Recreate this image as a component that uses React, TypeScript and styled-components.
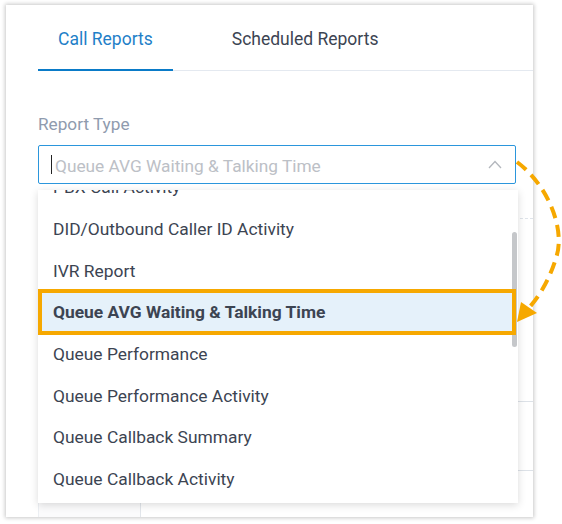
import React from "react";
import styled, { createGlobalStyle } from "styled-components";

const Global = createGlobalStyle`
  html, body { margin: 0; padding: 0; background: #ffffff; }
  body { font-family: Roboto, "Noto Sans", Arial, sans-serif; overflow: hidden; }
  * { box-sizing: border-box; }
`;

const Page = styled.div`
  position: relative;
  width: 562px;
  height: 524px;
  padding: 5px 0 0 6px;
`;

const Card = styled.div`
  width: 527px;
  height: 512px;
  background: #fff;
  box-shadow: 0 0 4px 1px rgba(0, 0, 0, 0.22);
  padding: 0 17px 0 32px;
  overflow: hidden;
  position: relative;
`;

const TabBar = styled.div`
  display: flex;
  gap: 39px;
  height: 66px;
  border-bottom: 1px solid #e4e9f0;
  margin-right: -17px;
`;

const Tab = styled.div<{ $active?: boolean }>`
  position: relative;
  display: flex;
  align-items: center;
  padding: 2px 20px 0 20px;
  font-size: 17.5px;
  color: ${(p) => (p.$active ? "#1f7fc8" : "#3c4452")};
  &::after {
    content: "";
    display: ${(p) => (p.$active ? "block" : "none")};
    position: absolute;
    left: 0;
    right: 0;
    bottom: -1px;
    height: 2px;
    background: #0a7bc8;
  }
`;

const Field = styled.div`
  position: relative;
  margin-top: 43px;
`;

const Label = styled.div`
  font-size: 17.2px;
  color: #8f9bae;
  line-height: 20px;
  margin-bottom: 11px;
`;

const Input = styled.div`
  height: 39px;
  border: 1px solid #2b96dc;
  border-radius: 2px;
  display: flex;
  align-items: center;
  padding: 0 13px 0 12px;
`;

const Caret = styled.span`
  width: 1px;
  height: 19px;
  background: #222;
  margin-right: 3px;
`;

const Placeholder = styled.span`
  flex: 1;
  font-size: 17.3px;
  color: #bcc0c6;
  padding-top: 3px;
`;

const Dropdown = styled.div`
  position: absolute;
  top: 76px;
  left: 0;
  width: 480px;
  height: 313px;
  background: #fff;
  box-shadow: 0 2px 8px rgba(0, 0, 0, 0.15);
  overflow: hidden;
  z-index: 2;
  padding-bottom: 4px;
`;

const List = styled.div`
  margin-top: -23.5px;
  margin-right: 6px;
`;

const Item = styled.div<{ $selected?: boolean }>`
  position: relative;
  height: 41.7px;
  display: flex;
  align-items: center;
  padding-left: 15px;
  font-size: 17.4px;
  color: #3c4452;
  font-weight: ${(p) => (p.$selected ? 700 : 400)};
  background: ${(p) => (p.$selected ? "#e5f1fa" : "transparent")};
  &::after {
    content: "";
    display: ${(p) => (p.$selected ? "block" : "none")};
    position: absolute;
    top: -3px;
    bottom: -2px;
    left: 0;
    right: -4px;
    border: 4.5px solid #f6a800;
    z-index: 2;
  }
`;

const Thumb = styled.div`
  position: absolute;
  right: 1px;
  top: 42px;
  width: 5px;
  height: 115px;
  border-radius: 3px;
  background: #c5c7ca;
  z-index: 1;
`;

const Separator = styled.div`
  margin-top: 34px;
  margin-right: -17px;
  border-top: 1px dashed #dfe4ea;
  height: 183px;
`;

const Table = styled.div`
  margin-right: -17px;
  border-left: 1px solid #eceff3;
`;

const Row = styled.div<{ $h: number; $split?: boolean }>`
  height: ${(p) => p.$h}px;
  border-top: 1px solid #dde2e8;
  display: ${(p) => (p.$split ? "grid" : "block")};
  grid-template-columns: 102px 1fr;
`;

const Cell = styled.div`
  border-right: 1px solid #e2e6eb;
  background: #fbfbfc;
`;

const Overlay = styled.svg`
  position: absolute;
  left: 0;
  top: 0;
  pointer-events: none;
  z-index: 5;
`;

const items = [
  "PBX Call Activity",
  "DID/Outbound Caller ID Activity",
  "IVR Report",
  "Queue AVG Waiting & Talking Time",
  "Queue Performance",
  "Queue Performance Activity",
  "Queue Callback Summary",
  "Queue Callback Activity",
];

export default function App() {
  return (
    <>
      <Global />
      <Page>
        <Card>
          <TabBar>
            <Tab $active>Call Reports</Tab>
            <Tab>Scheduled Reports</Tab>
          </TabBar>
          <Field>
            <Label>Report Type</Label>
            <Input>
              <Caret />
              <Placeholder>Queue AVG Waiting &amp; Talking Time</Placeholder>
              <svg width="14" height="9" viewBox="0 0 14 9">
                <path d="M1 8 L7 1.5 L13 8" fill="none" stroke="#b3b7bd" strokeWidth="1.3" />
              </svg>
            </Input>
            <Dropdown>
              <List>
                {items.map((t, i) => (
                  <Item key={t} $selected={i === 3}>
                    {t}
                  </Item>
                ))}
              </List>
              <Thumb />
            </Dropdown>
          </Field>
          <Separator />
          <Table>
            <Row $h={69} />
            <Row $h={60} $split>
              <Cell />
              <div />
            </Row>
          </Table>
        </Card>
        <Overlay width="562" height="524" viewBox="0 0 562 524">
          <path
            d="M517 162 C 548 185, 566 230, 556 258 C 550 278, 540 296, 527 310"
            fill="none"
            stroke="#f6a800"
            strokeWidth="4"
            strokeDasharray="12 7"
          />
          <polygon points="517,322 521,302 537,313" fill="#f6a800" />
        </Overlay>
      </Page>
    </>
  );
}
